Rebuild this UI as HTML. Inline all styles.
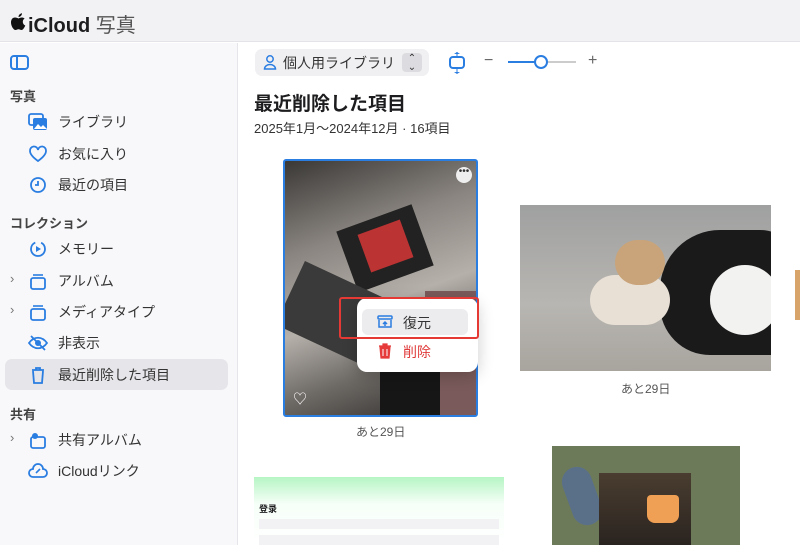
<!DOCTYPE html><html><head><meta charset="utf-8"><style>
*{margin:0;padding:0;box-sizing:border-box}
body{width:800px;height:545px;overflow:hidden;background:#fff;font-family:"Liberation Sans","Noto Sans CJK JP",sans-serif;position:relative;color:#1d1d1f}
.hdr{position:absolute;left:0;top:0;width:800px;height:42px;background:#f2f2f5;border-bottom:1px solid #e4e4e8}
.hdr .t{position:absolute;left:28px;top:9px;font-size:20px;font-weight:bold;color:#1d1d1f}
.hdr .t span{color:#555;font-weight:normal}
.side{position:absolute;left:0;top:43px;width:238px;height:502px;background:#f8f8fa;border-right:1px solid #e5e5ea}
.sec{position:absolute;left:10px;font-size:13px;color:#444;font-weight:bold}
.it{position:absolute;left:58px;font-size:14px;color:#333}
.ic{position:absolute;left:28px;width:20px;height:18px}
.chev{position:absolute;left:10px;font-size:13px;color:#777}
.sel{position:absolute;left:5px;top:359px;width:223px;height:31px;background:#e6e6ea;border-radius:7px}
.cap{position:absolute;font-size:12px;color:#555}
</style></head><body>
<div class="hdr"><svg style="position:absolute;left:10px;top:12px" width="17" height="19" viewBox="0 0 17 19"><path d="M8.5 6.5C7.5 6 6.5 5.5 5 5.5 2.5 5.5 1 7.5 1 10.5c0 3.500 2.500 7.500 4.500 7.500 1.200 0 1.800-.7 3-.7s1.800.7 3 .7c1.500 0 3-2.500 3.800-4.500-1.800-.8-2.500-2.300-2.500-3.800 0-1.300.7-2.500 1.800-3.200C13.700 5.800 12.700 5.500 11.800 5.500c-1.500 0-2.300.5-3.300 1z" fill="#111"/><path d="M8.500 5C8.500 3 10 1.500 12 1.200 12 3.200 10.500 4.800 8.500 5z" fill="#111"/></svg><div class="t">iCloud <span>写真</span></div></div>
<div class="side">
<svg style="position:absolute;left:10px;top:12px" width="20" height="16"><rect x="1" y="1" width="17" height="13" rx="3" fill="none" stroke="#2a7de1" stroke-width="2"/><line x1="7" y1="1" x2="7" y2="14" stroke="#2a7de1" stroke-width="2"/></svg>
</div>
<div class="sel"></div>
<div class="sec" style="top:86px">写真</div>
<svg class="ic" style="top:113px" viewBox="0 0 20 18"><rect x="1" y="1" width="14" height="11" rx="2" fill="none" stroke="#2a7de1" stroke-width="1.8"/><rect x="5" y="5" width="14" height="12" rx="2" fill="#2a7de1"/><path d="M6 16l4-5 3 3 2-2 4 4z" fill="#fff"/></svg>
<div class="it" style="top:112px">ライブラリ</div>
<svg class="ic" style="top:145px" viewBox="0 0 20 18"><path d="M10 16C3 11 2 8 2 6a4 4 0 0 1 8-1 4 4 0 0 1 8 1c0 2-1 5-8 10z" fill="none" stroke="#2a7de1" stroke-width="1.8"/></svg>
<div class="it" style="top:144px">お気に入り</div>
<svg class="ic" style="top:176px" viewBox="0 0 20 18"><circle cx="10" cy="9" r="7" fill="none" stroke="#2a7de1" stroke-width="1.8"/><path d="M10 5v4H7" fill="none" stroke="#2a7de1" stroke-width="1.8"/></svg>
<div class="it" style="top:175px">最近の項目</div>
<div class="sec" style="top:213px">コレクション</div>
<svg class="ic" style="top:240px" viewBox="0 0 20 18"><circle cx="10" cy="9" r="7" fill="none" stroke="#2a7de1" stroke-width="1.8" stroke-dasharray="30 6"/><path d="M8 6l5 3-5 3z" fill="#2a7de1"/></svg>
<div class="it" style="top:239px">メモリー</div>
<div class="chev" style="top:271px">›</div>
<svg class="ic" style="top:272px" viewBox="0 0 20 18"><rect x="3" y="6" width="14" height="11" rx="2" fill="none" stroke="#2a7de1" stroke-width="1.8"/><line x1="5" y1="3" x2="15" y2="3" stroke="#2a7de1" stroke-width="1.6"/></svg>
<div class="it" style="top:271px">アルバム</div>
<div class="chev" style="top:302px">›</div>
<svg class="ic" style="top:303px" viewBox="0 0 20 18"><rect x="3" y="6" width="14" height="11" rx="2" fill="none" stroke="#2a7de1" stroke-width="1.8"/><line x1="5" y1="3" x2="15" y2="3" stroke="#2a7de1" stroke-width="1.6"/></svg>
<div class="it" style="top:302px">メディアタイプ</div>
<svg class="ic" style="top:334px" viewBox="0 0 20 18"><path d="M1 9c5-7 13-7 18 0-5 7-13 7-18 0z" fill="none" stroke="#2a7de1" stroke-width="1.8"/><circle cx="10" cy="9" r="3" fill="#2a7de1"/><line x1="3" y1="2" x2="17" y2="16" stroke="#2a7de1" stroke-width="1.8"/></svg>
<div class="it" style="top:333px">非表示</div>
<svg class="ic" style="top:366px" viewBox="0 0 20 18"><path d="M4 4h12M8 4V2h4v2M5 5l1 12h8l1-12" fill="none" stroke="#2a7de1" stroke-width="1.8"/></svg>
<div class="it" style="top:365px">最近削除した項目</div>
<div class="sec" style="top:404px">共有</div>
<div class="chev" style="top:430px">›</div>
<svg class="ic" style="top:431px" viewBox="0 0 20 18"><rect x="3" y="6" width="14" height="11" rx="2" fill="none" stroke="#2a7de1" stroke-width="1.8"/><circle cx="7" cy="5" r="3" fill="#2a7de1"/></svg>
<div class="it" style="top:430px">共有アルバム</div>
<svg class="ic" style="top:462px" viewBox="0 0 20 18"><path d="M5 15a4 4 0 0 1 0-8 5 5 0 0 1 10 0 4 4 0 0 1 0 8z" fill="none" stroke="#2a7de1" stroke-width="1.8"/><path d="M8 11l4-4" stroke="#2a7de1" stroke-width="1.6"/></svg>
<div class="it" style="top:461px">iCloudリンク</div>

<div style="position:absolute;left:255px;top:49px;width:174px;height:27px;background:#f0f0f3;border-radius:7px"></div>
<svg style="position:absolute;left:263px;top:54px" width="14" height="16"><circle cx="7" cy="5" r="3.2" fill="none" stroke="#2a7de1" stroke-width="1.5"/><path d="M1.5 15a5.5 4.5 0 0 1 11 0z" fill="none" stroke="#2a7de1" stroke-width="1.5"/></svg>
<div style="position:absolute;left:283px;top:53px;font-size:14px;color:#333">個人用ライブラリ</div>
<div style="position:absolute;left:402px;top:53px;width:20px;height:19px;background:#dcdce0;border-radius:4px;font-size:10px;text-align:center;line-height:9px;padding-top:1px;color:#333">⌃<br>⌄</div>
<svg style="position:absolute;left:448px;top:51px" width="18" height="24"><rect x="2" y="6" width="14" height="11" rx="3" fill="none" stroke="#2a7de1" stroke-width="2"/><path d="M6 3h6L9 1zM6 21h6l-3 2z" fill="#2a7de1"/><line x1="9" y1="1" x2="9" y2="6" stroke="#2a7de1"/><line x1="9" y1="17" x2="9" y2="22" stroke="#2a7de1"/></svg>
<div style="position:absolute;left:484px;top:52px;font-size:16px;color:#666">−</div>
<div style="position:absolute;left:508px;top:61px;width:34px;height:2px;background:#2a7de1"></div>
<div style="position:absolute;left:542px;top:61px;width:34px;height:2px;background:#ccc"></div>
<div style="position:absolute;left:534px;top:55px;width:14px;height:14px;border:2px solid #2a7de1;border-radius:50%;background:#fff"></div>
<div style="position:absolute;left:588px;top:52px;font-size:16px;color:#666">+</div>
<div style="position:absolute;left:254px;top:89px;font-size:19px;font-weight:bold;color:#1d1d1f">最近削除した項目</div>
<div style="position:absolute;left:254px;top:118px;font-size:13px;color:#333">2025年1月〜2024年12月 · 16項目</div>

<div style="position:absolute;left:283px;top:159px;width:195px;height:258px;border:2px solid #2a7de1;border-radius:3px;overflow:hidden;background:linear-gradient(160deg,#3a3836 0%,#8a8580 30%,#b5b0aa 55%,#6e6a66 75%,#2a2624 100%)">
<div style="position:absolute;left:60px;top:55px;width:80px;height:65px;background:#222;transform:rotate(-20deg)"></div>
<div style="position:absolute;left:78px;top:65px;width:45px;height:40px;background:#b33;transform:rotate(-20deg)"></div>
<div style="position:absolute;left:0;top:120px;width:110px;height:70px;background:#3a3a3a;transform:rotate(25deg)"></div>
<div style="position:absolute;left:140px;top:130px;width:55px;height:130px;background:#7a5a5a"></div>
<div style="position:absolute;left:95px;top:200px;width:60px;height:60px;background:#161616"></div>
<div style="position:absolute;right:4px;top:6px;width:16px;height:16px;border-radius:50%;background:#eee;font-size:10px;line-height:10px;text-align:center;color:#333">•••</div>
<div style="position:absolute;left:8px;bottom:6px;color:#fff;font-size:14px">♡</div>
</div>
<div style="position:absolute;left:357px;top:298px;width:121px;height:74px;background:#fff;border-radius:10px;box-shadow:0 4px 16px rgba(0,0,0,.2)"></div>
<div style="position:absolute;left:362px;top:309px;width:106px;height:26px;background:#ececef;border-radius:6px"></div>
<svg style="position:absolute;left:377px;top:315px" width="16" height="14"><rect x="1" y="1" width="14" height="3" rx="1" fill="none" stroke="#2a7de1" stroke-width="1.5"/><path d="M2 5v7h12V5" fill="none" stroke="#2a7de1" stroke-width="1.5"/><path d="M8 11V7M6 9l2-2 2 2" stroke="#2a7de1" stroke-width="1.5" fill="none"/></svg>
<div style="position:absolute;left:403px;top:313px;font-size:14px;color:#333">復元</div>
<svg style="position:absolute;left:378px;top:343px" width="14" height="16"><path d="M1 3h12M5 3V1h4v2M2 4l1 11h8l1-11z" fill="#e63b3b" stroke="#e63b3b" stroke-width="1.2"/><path d="M5 6v7M9 6v7" stroke="#fff"/></svg>
<div style="position:absolute;left:403px;top:342px;font-size:14px;color:#e03a3a">削除</div>
<div style="position:absolute;left:339px;top:297px;width:140px;height:42px;border:2px solid #e53935;border-radius:3px"></div>
<div class="cap" style="left:356px;top:423px">あと29日</div>

<div style="position:absolute;left:520px;top:205px;width:251px;height:166px;overflow:hidden;background:linear-gradient(180deg,#9fa0a0,#b8b6b2 60%,#a8a49e)">
<div style="position:absolute;left:140px;top:25px;width:140px;height:125px;background:#1a1a1a;border-radius:60px 40px 30px 50px"></div>
<div style="position:absolute;left:190px;top:60px;width:70px;height:70px;background:#f2f2f0;border-radius:40px"></div>
<div style="position:absolute;left:70px;top:70px;width:80px;height:50px;background:#e8e0d5;border-radius:30px"></div>
<div style="position:absolute;left:95px;top:35px;width:50px;height:45px;background:#c9a47a;border-radius:25px"></div>
</div>
<div class="cap" style="left:621px;top:380px">あと29日</div>
<div style="position:absolute;left:795px;top:270px;width:5px;height:50px;background:#d9a46a"></div>

<div style="position:absolute;left:254px;top:477px;width:250px;height:68px;background:linear-gradient(180deg,#b6f5c4,#f6fff8 40%,#fff)">
<div style="position:absolute;left:5px;top:25px;font-size:9px;font-weight:bold">登录</div>
<div style="position:absolute;left:5px;top:42px;width:240px;height:10px;background:#f2f2f4"></div>
<div style="position:absolute;left:5px;top:58px;width:240px;height:10px;background:#f2f2f4"></div>
</div>
<div style="position:absolute;left:552px;top:446px;width:188px;height:99px;background:#6d7a5a">
<div style="position:absolute;left:15px;top:20px;width:30px;height:60px;background:#5a7088;border-radius:20px;transform:rotate(-20deg)"></div>
<div style="position:absolute;left:47px;top:27px;width:92px;height:72px;background:linear-gradient(180deg,#4a3d30,#2a2420)">
<div style="position:absolute;left:48px;top:22px;width:32px;height:28px;background:#f0a055;border-radius:4px 4px 8px 8px"></div>
</div>
</div>
</body></html>
